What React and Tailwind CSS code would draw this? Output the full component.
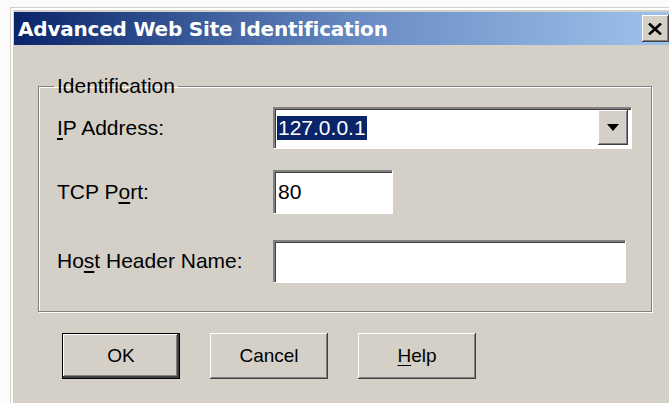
import React from 'react';

// classic 3D bevels
const raised = 'shadow-[inset_-1px_-1px_0_#404040,inset_1px_1px_0_#ffffff,inset_-2px_-2px_0_#808080,inset_2px_2px_0_#d4d0c8]';
const sunken = 'shadow-[inset_2px_2px_0_#808080,inset_3px_3px_0_#404040,1px_1px_0_#ffffff]';

const Label = ({ before, mark, after }) => (
  <div className="w-[216px] shrink-0 text-[21px] text-black">
    {before}
    <span className="underline underline-offset-[3px]">{mark}</span>
    {after}
  </div>
);

const Button = ({ children, primary }) => (
  <button
    className={`w-[118px] h-[46px] bg-[#d4d0c8] text-[19px] text-black flex items-center justify-center ${
      primary
        ? 'border border-black shadow-[inset_-2px_-2px_0_#404040,inset_1px_1px_0_#ffffff,inset_-3px_-3px_0_#808080]'
        : raised
    }`}
  >
    {children}
  </button>
);

export default function App() {
  return (
    <div className="w-[669px] h-[403px] overflow-hidden bg-[#fbfbfb] pl-[10px] pt-[7px] font-['Liberation_Sans',Arial,sans-serif]">
      <div className="w-[700px] h-[420px] bg-[#d4d0c8] border-l border-t border-[#d4d0c8] shadow-[inset_2px_2px_0_#ffffff] pl-[3px] pt-[4px]">
        {/* title bar */}
        <div className="h-[33px] flex items-center pl-[4px] pr-[30px] bg-gradient-to-r from-[#0a246a] via-[#6a8cc4] to-[#a6caf0]">
          <span className="text-white font-bold text-[20px] font-['DejaVu_Sans',sans-serif] tracking-[-0.2px]">
            Advanced Web Site Identification
          </span>
          <div className="ml-[254px] w-[27px] h-[27px] bg-[#d4d0c8] flex items-center justify-center shadow-[inset_-1px_-1px_0_#404040,inset_1px_1px_0_#ffffff,inset_-2px_-2px_0_#808080]">
            <svg width="14" height="12" viewBox="0 0 14 12">
              <path d="M1 0.5 L13 11.5 M13 0.5 L1 11.5" stroke="#000" strokeWidth="2.6" />
            </svg>
          </div>
        </div>

        {/* body */}
        <div className="pl-[24px] pt-[30px]">
          <fieldset className="w-[614px] border border-[#808080] shadow-[inset_1px_1px_0_#ffffff,1px_1px_0_#ffffff] pl-[18px] pt-[10px] pb-[29px]">
            <legend className="-ml-[3px] px-[3px] text-[21px] leading-[22px] text-black">Identification</legend>

            <div className="flex items-center">
              <Label mark="I" after="P Address:" />
              <div className={`w-[358px] h-[41px] bg-white flex items-center justify-between pl-[4px] pr-[3px] ${sunken}`}>
                <span className="bg-[#0a246a] text-white text-[21px] leading-[24px] px-[1px]">127.0.0.1</span>
                <div className={`w-[30px] h-[35px] bg-[#d4d0c8] flex items-center justify-center ${raised}`}>
                  <svg width="12" height="7" viewBox="0 0 12 7">
                    <path d="M0 0 H12 L6 7 Z" fill="#000" />
                  </svg>
                </div>
              </div>
            </div>

            <div className="flex items-center mt-[22px]">
              <Label before="TCP P" mark="o" after="rt:" />
              <div className={`w-[119px] h-[43px] bg-white flex items-center pl-[5px] text-[21px] ${sunken}`}>80</div>
            </div>

            <div className="flex items-center mt-[27px]">
              <Label before="Ho" mark="s" after="t Header Name:" />
              <div className={`w-[352px] h-[42px] bg-white ${sunken}`} />
            </div>
          </fieldset>

          <div className="flex gap-[30px] ml-[24px] mt-[21px]">
            <Button primary>OK</Button>
            <Button>Cancel</Button>
            <Button>
              <span className="underline underline-offset-[3px]">H</span>elp
            </Button>
          </div>
        </div>
      </div>
    </div>
  );
}
